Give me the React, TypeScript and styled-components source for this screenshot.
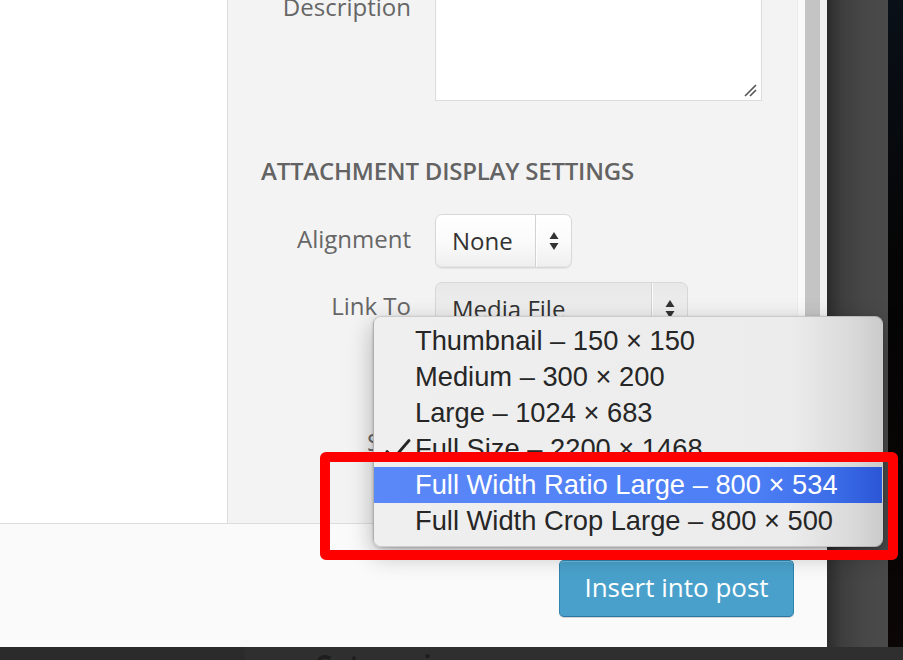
import React from "react";
import styled, { createGlobalStyle } from "styled-components";

const Global = createGlobalStyle`
  html, body { margin: 0; padding: 0; background: #2f2f2f; overflow: hidden; }
  * { box-sizing: border-box; }
`;

const Page = styled.div`
  position: relative;
  width: 903px;
  height: 660px;
  overflow: hidden;
  display: flex;
  flex-direction: column;
  background: #2f2f2f;
  font-family: "Open Sans", "Liberation Sans", sans-serif;
`;

const Upper = styled.div`
  display: flex;
  height: 647px;
`;

const Modal = styled.div`
  width: 827px;
  display: flex;
  flex-direction: column;
`;

const Body = styled.div`
  display: flex;
  height: 524px;
  border-bottom: 1px solid #dddddd;
`;

const Preview = styled.div`
  width: 228px;
  background: #ffffff;
  border-right: 1px solid #dcdcdc;
`;

const Sidebar = styled.div`
  flex: 1;
  background: #f3f3f3;
  overflow: hidden;
  padding-left: 33px;
`;

const ScrollTrack = styled.div`
  width: 30px;
  display: flex;
  background: #f9f9f9;
  border-left: 1px solid #ececec;
  padding-left: 7px;
`;

const ScrollThumb = styled.div`
  width: 15px;
  background: #c4c4c4;
`;

const ScrollEdge = styled.div`
  flex: 1;
  background: #f2f2f2;
`;

const Form = styled.div`
  margin-top: -30px;
  display: flex;
  flex-direction: column;
`;

const Row = styled.div<{ $top?: number; $align?: string }>`
  display: grid;
  grid-template-columns: 150px auto;
  justify-content: start;
  column-gap: 24px;
  align-items: ${(p) => p.$align ?? "center"};
  margin-top: ${(p) => p.$top ?? 0}px;
`;

const Label = styled.label<{ $pad?: number; $lift?: number }>`
  font-size: 24px;
  line-height: 33px;
  color: #666666;
  text-align: right;
  padding-top: ${(p) => p.$pad ?? 0}px;
  padding-bottom: ${(p) => p.$lift ?? 0}px;
`;

const TextArea = styled.div`
  position: relative;
  width: 327px;
  height: 131px;
  background: #ffffff;
  border: 1px solid #dddddd;
  box-shadow: inset 0 1px 2px rgba(0, 0, 0, 0.06);
`;

const Grip = styled.svg`
  position: absolute;
  right: 4px;
  bottom: 3px;
`;

const Heading = styled.h2`
  margin: 53px 0 0;
  font-size: 24px;
  line-height: 33px;
  font-weight: 600;
  letter-spacing: -0.22px;
  color: #636363;
  text-transform: uppercase;
`;

const Select = styled.div<{ $w: number; $pressed?: boolean }>`
  width: ${(p) => p.$w}px;
  height: 54px;
  display: flex;
  border: 1px solid #d8d8d8;
  border-radius: 7px;
  background: ${(p) =>
    p.$pressed
      ? "linear-gradient(#e8e8e8, #efefef 60%, #f2f2f2)"
      : "linear-gradient(#ffffff, #fafafa 55%, #eeeeee)"};
  box-shadow: 0 1px 1px rgba(0, 0, 0, 0.06), inset 0 -1px 0 rgba(0, 0, 0, 0.03);
  overflow: hidden;
`;

const SelectValue = styled.span`
  flex: 1;
  padding-left: 16px;
  font-size: 24px;
  line-height: 51px;
  color: #333333;
  white-space: nowrap;
`;

const SelectArrow = styled.span`
  width: 36px;
  border-left: 1px solid #d2d2d2;
  display: flex;
  align-items: center;
  justify-content: center;
  box-shadow: inset 1px 0 0 rgba(255, 255, 255, 0.8);
`;

const UrlInput = styled.div`
  width: 327px;
  height: 54px;
  background: #ffffff;
  border: 1px solid #dddddd;
  font-size: 22px;
  line-height: 52px;
  padding-left: 10px;
  color: #555;
  overflow: hidden;
  white-space: nowrap;
`;

const Footer = styled.div`
  height: 123px;
  background: #fafafa;
  display: flex;
  justify-content: flex-end;
  align-items: flex-start;
  padding: 36px 33px 0 0;
`;

const PrimaryButton = styled.button`
  width: 235px;
  height: 57px;
  border-radius: 5px;
  border: 1px solid #2f84ae;
  border-bottom-color: #2a77a0;
  background: #49a1cb;
  color: #ffffff;
  font-family: "Open Sans", "Liberation Sans", sans-serif;
  font-size: 26px;
  padding: 0 0 3px;
  box-shadow: inset 0 1px 0 rgba(140, 205, 235, 0.6), 0 1px 0 rgba(0, 0, 0, 0.15);
`;

const Backdrop = styled.div`
  width: 61px;
  background: linear-gradient(to right, #2c2c2c, #3e3e3e 25%, #474747 60%, #4a4a4a);
`;

const Edge = styled.div`
  flex: 1;
  background: linear-gradient(#0a1018, #050505 40%, #0c0606);
`;

const BottomStrip = styled.div`
  height: 13px;
  display: flex;
  background: #2f2f2f;
  overflow: hidden;
`;

const StripDark = styled.div`
  width: 245px;
  background: #2b2b2b;
`;

const StripText = styled.div`
  padding: 4px 0 0 69px;
  font-size: 28px;
  font-weight: 700;
  line-height: 1;
  color: #1e1e1e;
`;

const Menu = styled.div`
  position: absolute;
  left: 373px;
  top: 316px;
  width: 510px;
  height: 231px;
  padding: 6px 0 7px;
  border-radius: 8px;
  border: 1px solid rgba(0, 0, 0, 0.14);
  background: linear-gradient(to right, #efefef 0%, #ececec 82%, #dadada 94%, #cbcbcb 100%);
  box-shadow: 0 8px 24px rgba(0, 0, 0, 0.28), 0 1px 3px rgba(0, 0, 0, 0.2);
  overflow: hidden;
`;

const MenuItem = styled.div<{ $active?: boolean }>`
  position: relative;
  height: 36px;
  padding-left: 41px;
  font-family: "Liberation Sans", Arial, sans-serif;
  font-size: 27.3px;
  line-height: 36px;
  white-space: nowrap;
  color: ${(p) => (p.$active ? "#ffffff" : "#262626")};
  background: ${(p) =>
    p.$active
      ? "linear-gradient(to right, #5b88f8 0%, #4c7ef5 75%, #3d6ee9 90%, #2b56d6 100%)"
      : "transparent"};
`;

const Check = styled.svg`
  position: absolute;
  left: 11px;
  top: 8px;
`;

const Annotation = styled.div`
  position: absolute;
  left: 320px;
  top: 452px;
  width: 578px;
  height: 108px;
  border: 10px solid #ff0000;
  border-radius: 6px;
  pointer-events: none;
`;

const Arrows = () => (
  <svg width="10" height="20" viewBox="0 0 10 20">
    <path d="M5 1 L9.5 8 H0.5 Z" fill="#333" />
    <path d="M5 19 L9.5 12 H0.5 Z" fill="#333" />
  </svg>
);

const items = [
  { label: "Thumbnail \u2013 150 \u00d7 150" },
  { label: "Medium \u2013 300 \u00d7 200" },
  { label: "Large \u2013 1024 \u00d7 683" },
  { label: "Full Size \u2013 2200 \u00d7 1468", checked: true },
  { label: "Full Width Ratio Large \u2013 800 \u00d7 534", active: true },
  { label: "Full Width Crop Large \u2013 800 \u00d7 500" },
];

export default function App() {
  return (
    <>
      <Global />
      <Page>
        <Upper>
          <Modal>
            <Body>
              <Preview />
              <Sidebar>
                <Form>
                  <Row $align="start">
                    <Label $pad={20}>Description</Label>
                    <TextArea>
                      <Grip width="14" height="14" viewBox="0 0 14 14">
                        <path d="M2 13 L13 2 M7 13 L13 7" stroke="#555" strokeWidth="1.6" />
                      </Grip>
                    </TextArea>
                  </Row>
                  <Heading>Attachment Display Settings</Heading>
                  <Row $top={27}>
                    <Label $lift={5}>Alignment</Label>
                    <Select $w={137}>
                      <SelectValue>None</SelectValue>
                      <SelectArrow>
                        <Arrows />
                      </SelectArrow>
                    </Select>
                  </Row>
                  <Row $top={14}>
                    <Label $lift={7}>Link To</Label>
                    <Select $w={253} $pressed>
                      <SelectValue>Media File</SelectValue>
                      <SelectArrow>
                        <Arrows />
                      </SelectArrow>
                    </Select>
                  </Row>
                  <Row $top={14}>
                    <span />
                    <UrlInput>http://example.com/wp-content/uploads/photo.jpg</UrlInput>
                  </Row>
                  <Row $top={14}>
                    <Label $lift={7}>Size</Label>
                    <Select $w={327} $pressed>
                      <SelectValue>Full Size – 2200 × 1468</SelectValue>
                      <SelectArrow>
                        <Arrows />
                      </SelectArrow>
                    </Select>
                  </Row>
                </Form>
              </Sidebar>
              <ScrollTrack>
                <ScrollThumb />
                <ScrollEdge />
              </ScrollTrack>
            </Body>
            <Footer>
              <PrimaryButton>Insert into post</PrimaryButton>
            </Footer>
          </Modal>
          <Backdrop />
          <Edge />
        </Upper>
        <BottomStrip>
          <StripDark />
          <StripText>Categories</StripText>
        </BottomStrip>

        <Menu>
          {items.map((it) => (
            <MenuItem key={it.label} $active={it.active}>
              {it.checked && (
                <Check width="26" height="22" viewBox="0 0 26 22">
                  <path
                    d="M2 12.5 L8.5 19.5 L24 1.5"
                    fill="none"
                    stroke="#262626"
                    strokeWidth="2.8"
                    strokeLinecap="round"
                    strokeLinejoin="round"
                  />
                </Check>
              )}
              {it.label}
            </MenuItem>
          ))}
        </Menu>
        <Annotation />
      </Page>
    </>
  );
}
